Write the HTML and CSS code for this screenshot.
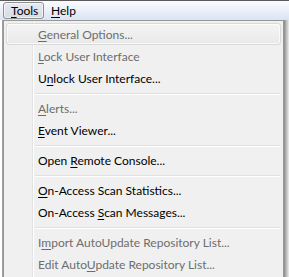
FILE: index.html
```html
<!DOCTYPE html>
<html lang="en">

    <head>
        <meta charset="UTF-8">
        <title>Tools menu</title>
        <link rel="stylesheet" href="styles.css">
    </head>

    <body>
        <div class="menubar">
            <span class="top open"><u>T</u>ools</span>
            <span class="top"><u>H</u>elp</span>
        </div>
        <div class="work">
            <div class="app-left"></div>
            <div class="popup">
                <div class="item hot off"><u>G</u>eneral Options...</div>
                <div class="item off"><u>L</u>ock User Interface</div>
                <div class="item">U<u>n</u>lock User Interface...</div>
                <div class="sep"></div>
                <div class="item off"><u>A</u>lerts...</div>
                <div class="item"><u>E</u>vent Viewer...</div>
                <div class="sep"></div>
                <div class="item">Open <u>R</u>emote Console...</div>
                <div class="sep"></div>
                <div class="item"><u>O</u>n-Access Scan Statistics...</div>
                <div class="item">On-Access <u>S</u>can Messages...</div>
                <div class="sep"></div>
                <div class="item off">I<u>m</u>port AutoUpdate Repository List...</div>
                <div class="item off">Edit Auto<u>U</u>pdate Repository List...</div>
            </div>
            <div class="app-right"></div>
        </div>
    </body>

</html>
```

FILE: styles.css
```css
* {
    margin: 0;
    padding: 0;
    box-sizing: border-box;
}

body {
    width: 289px;
    height: 277px;
    overflow: hidden;
    background: #fff;
    font-family: Lato, "Noto Sans", sans-serif;
    font-size: 12px;
    color: #000;
}

u {
    text-decoration-thickness: 1px;
    text-underline-offset: 2px;
}

.menubar {
    height: 20px;
    border-top: 1px solid #5a5a5a;
    background: linear-gradient(#fbfcfe, #dbe4f4);
    display: flex;
    align-items: center;
    padding-left: 3px;
}

.top {
    height: 17px;
    line-height: 15px;
    padding: 0 6px;
    border: 1px solid transparent;
    border-radius: 3px;
}

.top.open {
    width: 41px;
    padding-left: 7px;
    border-color: #8e8f8f;
    background: linear-gradient(#e6eaf0, #d6dbe3);
    box-shadow: inset 0 0 0 1px rgba(255, 255, 255, 0.6);
}

.work {
    display: flex;
    height: 257px;
}

.app-left {
    width: 3px;
    border-right: 1px solid #a0a0a0;
    background: #fff;
}

.popup {
    width: 281px;
    border: 1px solid #979797;
    border-bottom: 0;
    padding: 2px 2px 0 2px;
    background: #f0f0f0 linear-gradient(90deg, transparent 28px, #e2e3e3 28px, #e2e3e3 29px, #fff 29px, #fff 30px, transparent 30px);
}

.item {
    height: 22px;
    line-height: 22px;
    padding-left: 31px;
    white-space: nowrap;
    border: 1px solid transparent;
    border-radius: 3px;
}

.item.off {
    color: #6d6d6d;
}

.item.hot {
    border-color: #d9d9d9;
    background: linear-gradient(#f4f4f4, #e9e9e9);
    box-shadow: inset 0 0 0 1px rgba(255, 255, 255, 0.7);
}

.sep {
    height: 8px;
    margin-left: 29px;
    margin-right: 1px;
    border-top: 4px solid transparent;
    background: linear-gradient(#e0e0e0 1px, #fff 1px, #fff 2px, transparent 2px);
    background-clip: padding-box;
}

.app-right {
    flex: 1;
    background: linear-gradient(90deg, #8a8a8a, #b5b5b5 2px, #d8d8d8 4px, #efefef);
}
```
